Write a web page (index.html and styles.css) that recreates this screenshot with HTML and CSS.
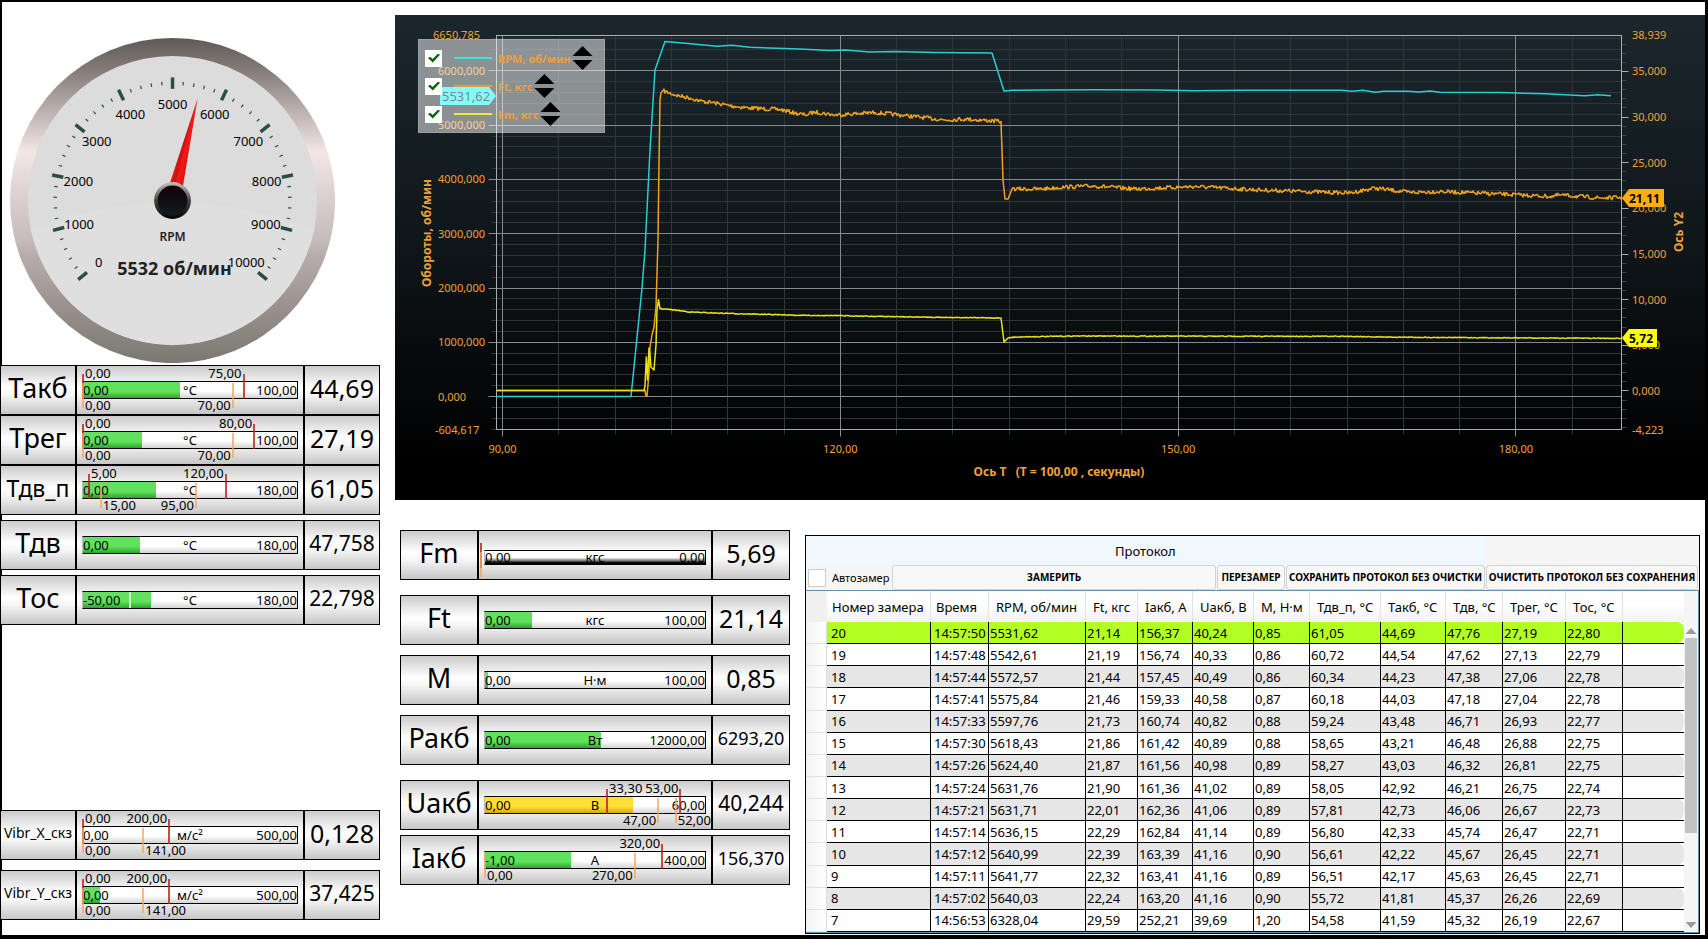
FILE: index.html
```html
<!DOCTYPE html>
<html lang="ru">
<head>
<meta charset="utf-8">
<title>Стенд: измерения</title>
<link rel="stylesheet" href="styles.css">
</head>
<body>
<main class="dashboard">
  <section class="sensors">
    <svg class="gauge" id="gauge" viewBox="0 0 326 326" role="img" aria-label="RPM 5532 об/мин">
      <defs>
        <linearGradient id="bezel" x1="0" y1="0" x2="0" y2="1">
          <stop offset="0" stop-color="#5e5a57"/>
          <stop offset=".1" stop-color="#857c79"/>
          <stop offset=".35" stop-color="#f2e6e6"/>
          <stop offset=".62" stop-color="#c6bcbb"/>
          <stop offset=".67" stop-color="#b7acab"/>
          <stop offset=".85" stop-color="#968d89"/>
          <stop offset="1" stop-color="#7a7871"/>
        </linearGradient>
        <linearGradient id="hubRing" x1="0" y1="0" x2="0" y2="1">
          <stop offset="0" stop-color="#c8bcbc"/>
          <stop offset=".5" stop-color="#4c4444"/>
          <stop offset="1" stop-color="#000"/>
        </linearGradient>
        <linearGradient id="hubCore" x1="0" y1="0" x2="0" y2="1">
          <stop offset="0" stop-color="#120004"/>
          <stop offset="1" stop-color="#101c22"/>
        </linearGradient>
        <linearGradient id="needleFill" x1="0" y1="0" x2="1" y2="0">
          <stop offset="0" stop-color="#f01818"/>
          <stop offset=".35" stop-color="#c81212"/>
          <stop offset=".5" stop-color="#f51818"/>
          <stop offset="1" stop-color="#e01010"/>
        </linearGradient>
      </defs>
      <circle cx="163" cy="163" r="163" fill="url(#bezel)"/>
      <circle cx="163" cy="163" r="145" fill="#dcdcdc"/>
      <path d="M21 192 Q163 138 305 192 A145 145 0 0 1 21 192Z" fill="#dfdfdf"/>
      <g id="gaugeTicks"></g>
      <text class="gauge-name" x="163" y="204">RPM</text>
      <text class="gauge-value" x="165" y="238">5532 об/мин</text>
      <path d="M163 58 L170 150 L156 150Z" fill="url(#needleFill)" transform="rotate(13.8 163 163)"/>
      <circle cx="163" cy="163" r="18.5" fill="url(#hubRing)"/>
      <circle cx="163" cy="163" r="15" fill="url(#hubCore)"/>
    </svg>

    <div class="meter">
      <div class="cell name">Такб</div>
      <div class="cell"><div class="scale"><div class="fill" style="width:45.2%"></div>
        <div class="legends"><span>0,00</span><span>°C</span><span>100,00</span></div>
        <span class="limit alarm after" style="left:0%">0,00</span><span class="limit alarm before" style="right:25%">75,00</span>
        <span class="limit warn after" style="left:0%">0,00</span><span class="limit warn before" style="right:30%">70,00</span></div></div>
      <div class="cell value">44,69</div>
    </div>
    <div class="meter">
      <div class="cell name">Трег</div>
      <div class="cell"><div class="scale"><div class="fill" style="width:27.7%"></div>
        <div class="legends"><span>0,00</span><span>°C</span><span>100,00</span></div>
        <span class="limit alarm after" style="left:0%">0,00</span><span class="limit alarm before" style="right:20%">80,00</span>
        <span class="limit warn after" style="left:0%">0,00</span><span class="limit warn before" style="right:30%">70,00</span></div></div>
      <div class="cell value">27,19</div>
    </div>
    <div class="meter">
      <div class="cell name name-md">Тдв_п</div>
      <div class="cell"><div class="scale"><div class="fill" style="width:34.2%"></div>
        <div class="legends"><span>0,00</span><span>°C</span><span>180,00</span></div>
        <span class="limit alarm after" style="left:2.8%">5,00</span><span class="limit alarm before" style="right:33.3%">120,00</span>
        <span class="limit warn after" style="left:8.3%">15,00</span><span class="limit warn before" style="right:47.2%">95,00</span></div></div>
      <div class="cell value">61,05</div>
    </div>
    <div class="meter space-sm">
      <div class="cell name">Тдв</div>
      <div class="cell"><div class="scale"><div class="fill" style="width:26.8%"></div>
        <div class="legends"><span>0,00</span><span>°C</span><span>180,00</span></div></div></div>
      <div class="cell value value-md">47,758</div>
    </div>
    <div class="meter space-sm">
      <div class="cell name">Тос</div>
      <div class="cell"><div class="scale"><div class="fill" style="width:31.9%"></div><div class="zero" style="left:21.7%"></div>
        <div class="legends"><span>-50,00</span><span>°C</span><span>180,00</span></div></div></div>
      <div class="cell value value-md">22,798</div>
    </div>
    <div class="meter to-bottom">
      <div class="cell name name-sm">Vibr_X_скз</div>
      <div class="cell"><div class="scale">
        <div class="legends"><span>0,00</span><span>м/с²</span><span>500,00</span></div>
        <span class="limit alarm after" style="left:0%">0,00</span><span class="limit alarm before" style="right:59.7%">200,00</span>
        <span class="limit warn after" style="left:0%">0,00</span><span class="limit warn after" style="left:28.2%">141,00</span></div></div>
      <div class="cell value">0,128</div>
    </div>
    <div class="meter space-md">
      <div class="cell name name-sm">Vibr_Y_скз</div>
      <div class="cell"><div class="scale"><div class="fill" style="width:7.8%"></div>
        <div class="legends"><span>0,00</span><span>м/с²</span><span>500,00</span></div>
        <span class="limit alarm after" style="left:0%">0,00</span><span class="limit alarm before" style="right:59.7%">200,00</span>
        <span class="limit warn after" style="left:0%">0,00</span><span class="limit warn after" style="left:28.2%">141,00</span></div></div>
      <div class="cell value value-md">37,425</div>
    </div>
  </section>

  <div class="workspace">
    <section class="chart">
      <svg id="plot" viewBox="0 0 1310 485" role="img" aria-label="График RPM, Ft, Fm"></svg>
      <form class="legend">
        <div class="legend-row"><input type="checkbox" id="s1" checked><i class="swatch cyan"></i><label for="s1">RPM, об/мин</label>
          <span class="spin"><button type="button" class="up" aria-label="Выше"></button><button type="button" class="down" aria-label="Ниже"></button></span></div>
        <div class="legend-row"><input type="checkbox" id="s2" checked><i class="swatch orange"></i><label for="s2">Ft, кгс</label>
          <span class="spin"><button type="button" class="up" aria-label="Выше"></button><button type="button" class="down" aria-label="Ниже"></button></span></div>
        <div class="legend-row"><input type="checkbox" id="s3" checked><i class="swatch yellow"></i><label for="s3">Fm, кгс</label>
          <span class="spin"><button type="button" class="up" aria-label="Выше"></button><button type="button" class="down" aria-label="Ниже"></button></span></div>
      </form>
    </section>

    <div class="lower">
      <section class="forces">
        <div class="meter">
          <div class="cell name">Fm</div>
          <div class="cell"><div class="scale scale-empty">
            <div class="legends"><span>0,00</span><span>кгс</span><span>0,00</span></div>
            <span class="limit alarm after" style="left:-2%"></span><span class="limit warn after" style="left:-2%"></span></div></div>
          <div class="cell value">5,69</div>
        </div>
        <div class="meter space-lg">
          <div class="cell name">Ft</div>
          <div class="cell"><div class="scale"><div class="fill" style="width:21.5%"></div>
            <div class="legends"><span>0,00</span><span>кгс</span><span>100,00</span></div></div></div>
          <div class="cell value">21,14</div>
        </div>
        <div class="meter space-md">
          <div class="cell name">М</div>
          <div class="cell"><div class="scale"><div class="fill" style="width:1.2%"></div>
            <div class="legends"><span>0,00</span><span>Н·м</span><span>100,00</span></div></div></div>
          <div class="cell value">0,85</div>
        </div>
        <div class="meter space-md">
          <div class="cell name">Ракб</div>
          <div class="cell"><div class="scale"><div class="fill" style="width:52.6%"></div>
            <div class="legends"><span>0,00</span><span>Вт</span><span>12000,00</span></div></div></div>
          <div class="cell value value-sm">6293,20</div>
        </div>
        <div class="meter space-lg">
          <div class="cell name">Uакб</div>
          <div class="cell"><div class="scale"><div class="fill fill-warn" style="width:67.3%"></div>
            <div class="legends"><span>0,00</span><span>В</span><span>60,00</span></div>
            <span class="limit alarm after" style="left:55.5%">33,30</span><span class="limit alarm before" style="right:11.2%">53,00</span>
            <span class="limit warn before" style="right:21.3%">47,00</span><span class="limit warn after" style="left:86.7%">52,00</span></div></div>
          <div class="cell value value-md">40,244</div>
        </div>
        <div class="meter space-sm">
          <div class="cell name">Iакб</div>
          <div class="cell"><div class="scale"><div class="fill" style="width:39.3%"></div>
            <div class="legends"><span>-1,00</span><span>А</span><span>400,00</span></div>
            <span class="limit alarm before" style="right:19.5%">320,00</span>
            <span class="limit warn after" style="left:0%">0,00</span><span class="limit warn before" style="right:32%">270,00</span></div></div>
          <div class="cell value value-sm">156,370</div>
        </div>
      </section>

      <section class="protocol">
        <div class="protocol-head"><h1>Протокол</h1></div>
        <div class="toolbar">
          <input type="checkbox" id="auto"><label for="auto">Автозамер</label>
          <button type="button" class="grow">ЗАМЕРИТЬ</button>
          <button type="button" class="b-redo">ПЕРЕЗАМЕР</button>
          <button type="button" class="b-save">СОХРАНИТЬ ПРОТОКОЛ БЕЗ ОЧИСТКИ</button>
          <button type="button" class="b-clear">ОЧИСТИТЬ ПРОТОКОЛ БЕЗ СОХРАНЕНИЯ</button>
        </div>
        <div class="grid-box">
          <table>
            <colgroup><col class="c0"><col class="c1"><col class="c2"><col class="c3"><col class="c4"><col class="c5"><col class="c6"><col class="c7"><col class="c8"><col class="c9"><col class="c10"><col class="c11"><col class="c12"><col></colgroup>
            <thead><tr><td></td><th>Номер замера</th><th>Время</th><th>RPM, об/мин</th><th>Ft, кгс</th><th>Iакб, А</th><th>Uакб, В</th><th>М, Н·м</th><th>Тдв_п, °C</th><th>Такб, °C</th><th>Тдв, °C</th><th>Трег, °C</th><th>Тос, °C</th><th></th></tr></thead>
            <tbody>
              <tr class="selected"><td></td><td>20</td><td>14:57:50</td><td>5531,62</td><td>21,14</td><td>156,37</td><td>40,24</td><td>0,85</td><td>61,05</td><td>44,69</td><td>47,76</td><td>27,19</td><td>22,80</td><td></td></tr>
              <tr><td></td><td>19</td><td>14:57:48</td><td>5542,61</td><td>21,19</td><td>156,74</td><td>40,33</td><td>0,86</td><td>60,72</td><td>44,54</td><td>47,62</td><td>27,13</td><td>22,79</td><td></td></tr>
              <tr><td></td><td>18</td><td>14:57:44</td><td>5572,57</td><td>21,44</td><td>157,45</td><td>40,49</td><td>0,86</td><td>60,34</td><td>44,23</td><td>47,38</td><td>27,06</td><td>22,78</td><td></td></tr>
              <tr><td></td><td>17</td><td>14:57:41</td><td>5575,84</td><td>21,46</td><td>159,33</td><td>40,58</td><td>0,87</td><td>60,18</td><td>44,03</td><td>47,18</td><td>27,04</td><td>22,78</td><td></td></tr>
              <tr><td></td><td>16</td><td>14:57:33</td><td>5597,76</td><td>21,73</td><td>160,74</td><td>40,82</td><td>0,88</td><td>59,24</td><td>43,48</td><td>46,71</td><td>26,93</td><td>22,77</td><td></td></tr>
              <tr><td></td><td>15</td><td>14:57:30</td><td>5618,43</td><td>21,86</td><td>161,42</td><td>40,89</td><td>0,88</td><td>58,65</td><td>43,21</td><td>46,48</td><td>26,88</td><td>22,75</td><td></td></tr>
              <tr><td></td><td>14</td><td>14:57:26</td><td>5624,40</td><td>21,87</td><td>161,56</td><td>40,98</td><td>0,89</td><td>58,27</td><td>43,03</td><td>46,32</td><td>26,81</td><td>22,75</td><td></td></tr>
              <tr><td></td><td>13</td><td>14:57:24</td><td>5631,76</td><td>21,90</td><td>161,36</td><td>41,02</td><td>0,89</td><td>58,05</td><td>42,92</td><td>46,21</td><td>26,75</td><td>22,74</td><td></td></tr>
              <tr><td></td><td>12</td><td>14:57:21</td><td>5631,71</td><td>22,01</td><td>162,36</td><td>41,06</td><td>0,89</td><td>57,81</td><td>42,73</td><td>46,06</td><td>26,67</td><td>22,73</td><td></td></tr>
              <tr><td></td><td>11</td><td>14:57:14</td><td>5636,15</td><td>22,29</td><td>162,84</td><td>41,14</td><td>0,89</td><td>56,80</td><td>42,33</td><td>45,74</td><td>26,47</td><td>22,71</td><td></td></tr>
              <tr><td></td><td>10</td><td>14:57:12</td><td>5640,99</td><td>22,39</td><td>163,39</td><td>41,16</td><td>0,90</td><td>56,61</td><td>42,22</td><td>45,67</td><td>26,45</td><td>22,71</td><td></td></tr>
              <tr><td></td><td>9</td><td>14:57:11</td><td>5641,77</td><td>22,32</td><td>163,41</td><td>41,16</td><td>0,89</td><td>56,51</td><td>42,17</td><td>45,63</td><td>26,45</td><td>22,71</td><td></td></tr>
              <tr><td></td><td>8</td><td>14:57:02</td><td>5640,03</td><td>22,24</td><td>163,20</td><td>41,16</td><td>0,90</td><td>55,72</td><td>41,81</td><td>45,37</td><td>26,26</td><td>22,69</td><td></td></tr>
              <tr><td></td><td>7</td><td>14:56:53</td><td>6328,04</td><td>29,59</td><td>252,21</td><td>39,69</td><td>1,20</td><td>54,58</td><td>41,59</td><td>45,32</td><td>26,19</td><td>22,67</td><td></td></tr>
            </tbody>
          </table>
          <div class="scrollbar"><i class="arrow arrow-up"></i><i class="thumb"></i><i class="arrow arrow-down"></i></div>
        </div>
      </section>
    </div>
  </div>
</main>
<script src="app.js"></script>
</body>
</html>
```
FILE: styles.css
```css
* { box-sizing: border-box; }
body { margin: 0; background: #fff; color: #000; font: 13px/15px "Noto Sans", "Open Sans", sans-serif; }
button, input { margin: 0; padding: 0; font: inherit; color: inherit; }

.dashboard {
  display: grid;
  grid-template-columns: minmax(0, 378fr) minmax(0, 1310fr);
  column-gap: 15px;
  min-height: 100vh;
  border: solid #000;
  border-width: 2px 3px 4px 2px;
}
.workspace { padding-top: 13px; }

/* left column */
.sensors { display: flex; flex-direction: column; padding: 36px 0 15px; }
.sensors .meter { margin-left: -2px; }
.gauge { display: block; width: 86%; margin: 0 0 2px 8px; }
.gauge text { text-anchor: middle; font-size: 13px; fill: #000; }
.gauge .gauge-name { font-size: 12px; font-weight: 600; fill: #222; }
.gauge .gauge-value { font-size: 18px; font-weight: 700; fill: #222; }

/* meters */
.meter { display: grid; grid-template-columns: 1fr 3fr 1fr; height: 50px; }
.space-sm { margin-top: 5px; }
.space-md { margin-top: 10px; }
.space-lg { margin-top: 15px; }
.to-bottom { margin-top: auto; }
.cell {
  min-width: 0;
  border: 1px solid #000;
  background: linear-gradient(#cbcbcb, #fff 45%, #f6f6f6 60%, #c6c6c6);
}
.name, .value { display: flex; align-items: center; justify-content: center; white-space: nowrap; line-height: 30px; padding-bottom: 4px; }
.name { font-size: 27px; }
.name-md { font-size: 23px; }
.name-sm { font-size: 14px; }
.value { font-size: 25px; }
.value-md { font-size: 21px; }
.value-sm { font-size: 18px; }
.scale {
  position: relative;
  height: 18px;
  margin: 15px 5px 0;
  border: 1px solid #000;
  border-left-color: #bbb;
  background: linear-gradient(#fff 55%, #d4d4d4);
}
.scale-empty { height: 15px; margin-top: 19px; background: linear-gradient(#fff 50%, #777 75%, #000 90%); }
.scale-empty .legends { line-height: 13px; }
.fill { position: absolute; inset: 0 auto 0 0; background: linear-gradient(#62e15e 60%, #2da52b); }
.fill-warn { background: linear-gradient(#ffdf35 60%, #d3a814); }
.zero { position: absolute; top: 0; bottom: 0; width: 2px; background: #d5ead3; }
.legends { position: relative; display: grid; grid-template-columns: 1fr auto 1fr; line-height: 16px; }
.legends span:last-child { text-align: right; }
.limit { position: absolute; line-height: 15px; height: 15px; }
.limit::before { content: ""; position: absolute; width: 2px; height: 25px; }
.after { padding-left: 2px; }
.before { padding-right: 2px; }
.after::before { left: -1px; }
.before::before { right: -1px; }
.alarm { top: -16px; }
.alarm::before { top: 8px; background: rgba(190, 30, 30, .8); }
.warn { top: 16px; }
.warn::before { bottom: 5px; background: rgba(245, 165, 85, .75); }

/* chart */
.chart { position: relative; background: linear-gradient(#1b272d, #10171b 45%, #000 92%); }
.chart > svg { display: block; width: 100%; }
.chart text { font-size: 11px; fill: #f0a038; }
.chart .axis-title { font-size: 12px; font-weight: 700; }
.chart .flag-text { font-size: 12px; font-weight: 700; fill: #000; }
.chart .flag-plain { font-size: 13px; font-weight: 400; }
.chart polyline { fill: none; stroke-width: 1.5; stroke-linejoin: round; }
.legend {
  position: absolute;
  left: 23px;
  top: 24px;
  width: 187px;
  padding: 4px 6px;
  border: 1px solid rgba(255, 255, 255, .15);
  background: rgba(255, 255, 255, .5);
}
.legend-row { display: flex; align-items: center; height: 28px; color: #f0a038; font-size: 11px; font-weight: 700; white-space: nowrap; }
.legend-row input {
  appearance: none;
  flex: none;
  width: 17px;
  height: 17px;
  margin-right: 12px;
  background: #fff;
}
.legend-row input:checked::before {
  content: "";
  display: block;
  width: 12px;
  height: 9px;
  margin: 4px 3px;
  background: #0a640a;
  clip-path: polygon(0 50%, 18% 35%, 38% 60%, 85% 0, 100% 15%, 40% 100%);
}
.swatch { flex: none; width: 38px; height: 2px; margin-right: 6px; }
.cyan { background: #45dede; }
.orange { background: #d8a53c; }
.yellow { background: #f0e840; }
.spin { display: flex; flex-direction: column; gap: 4px; margin-left: 2px; }
.spin button { width: 20px; height: 10px; border: 0; background: #000; }
.up { clip-path: polygon(50% 0, 100% 100%, 0 100%); }
.down { clip-path: polygon(0 0, 100% 0, 50% 100%); }

/* lower part */
.lower {
  display: grid;
  grid-template-columns: minmax(0, 390fr) minmax(0, 895fr);
  column-gap: 15px;
  padding: 30px 5px 1px;
}
.protocol { margin-top: 5px; border: 1px solid #000; background: #f5f5f5; }
.protocol-head { display: flex; height: 29px; }
.protocol-head h1 {
  flex: 0 0 76%;
  margin: 0;
  background: #f0f8fe;
  font-size: 13px;
  font-weight: 400;
  line-height: 31px;
  text-align: center;
}
.toolbar { display: flex; align-items: center; height: 25px; gap: 1px; padding: 0 1px; }
.toolbar input { appearance: none; width: 18px; height: 18px; margin: 0 5px 0 1px; border: 1px solid #ccc; background: #fff; }
.toolbar label { font-size: 11px; margin-right: 2px; }
.toolbar button {
  height: 25px;
  border: 1px solid #d2d2d2;
  border-radius: 3px;
  background: #f8f8f8;
  font-size: 10px;
  font-weight: 700;
  white-space: nowrap;
}
.grow { flex: 1; }
.b-redo { width: 68px; }
.b-save { width: 199px; }
.b-clear { width: 212px; }
.grid-box { display: flex; border: 1px solid #6b8fa8; border-width: 1px 1px 1px 0; background: #fff; }
table { flex: 1; min-width: 0; height: 341px; table-layout: fixed; border-collapse: separate; border-spacing: 0; }
.c0 { width: 21px; } .c1 { width: 104px; } .c2 { width: 58px; } .c3 { width: 97px; }
.c4 { width: 52px; } .c5 { width: 55px; } .c6 { width: 61px; } .c7 { width: 56px; }
.c8 { width: 71px; } .c9 { width: 65px; } .c10 { width: 57px; } .c11 { width: 63px; } .c12 { width: 57px; }
th, td { padding: 0; text-align: left; white-space: nowrap; overflow: hidden; }
thead th {
  height: 31px;
  padding: 2px 0 0 7px;
  border-right: 1px solid #e2e2e2;
  background: linear-gradient(#fff 40%, #f2f2f4);
  font-weight: 400;
}
thead th:nth-child(2), thead th:nth-child(3) { padding-left: 5px; }
thead td { background: #f0f0f0; }
thead th:last-child { border-right: 0; }
tbody td { height: 22px; padding: 1px 0 0 1px; border-right: 1px solid #000; border-bottom: 1px solid #000; }
tbody td:nth-child(2) { padding-left: 4px; }
tbody td:nth-child(3) { padding-left: 3px; }
tbody td:first-child { border-right: 1px solid #ddd; border-bottom-color: #e2e2e2; background: linear-gradient(90deg, #f2f2f2, #fff); }
tbody tr:nth-child(odd) td:not(:first-child) { background: #e6e6e6; }
tbody tr.selected td:not(:first-child) { background: #b2ff24; }
tbody tr td:last-child:not(:first-child) { position: relative; border-right: 0; background: none; }
tbody td:last-child::before { content: ""; position: absolute; inset: 0; border-radius: 0 7px 7px 0; }
tbody tr:nth-child(odd) td:last-child::before { background: #e6e6e6; }
tbody tr.selected td:last-child:last-child::before { background: #b2ff24; }
.scrollbar { display: flex; flex-direction: column; align-items: center; width: 14px; padding: 37px 0 4px; background: #f5f5f5; }
.arrow { width: 11px; height: 6px; background: #9a9a9a; }
.arrow-up { clip-path: polygon(50% 0, 100% 100%, 0 100%); }
.arrow-down { clip-path: polygon(0 0, 100% 0, 50% 100%); margin-top: auto; }
.thumb { width: 12px; height: 195px; margin-top: 4px; background: #c2c3c3; }
```
FILE: app.js
```js
const NS = "http://www.w3.org/2000/svg";
function add(parent, tag, attrs, text) {
  const el = document.createElementNS(NS, tag);
  for (const k in attrs) el.setAttribute(k, attrs[k]);
  if (text !== undefined) el.textContent = text;
  parent.appendChild(el);
  return el;
}

/* Gauge: 0..10000 over 260 degrees */
const ticks = document.getElementById("gaugeTicks");
for (let v = 0; v <= 10000; v += 200) {
  const deg = v * 0.026 - 130;
  const major = v % 1000 === 0;
  add(ticks, "line", {
    x1: 163, x2: 163, y1: major ? 39.5 : 43.5, y2: major ? 51 : 47,
    stroke: "#2b4d49", "stroke-width": major ? 3.5 : 1.2,
    transform: `rotate(${deg} 163 163)`
  });
  if (major) {
    const a = deg * Math.PI / 180;
    add(ticks, "text", { x: 163 + 96.5 * Math.sin(a), y: 168 - 96.5 * Math.cos(a) }, v);
  }
}

/* Chart */
const plot = document.getElementById("plot");
const L = 101.5, R = 1226.5, T = 20.5, B = 414.5;
const yRpm = v => B - (v + 604.617) * (B - T) / 7255.402;
const yF = v => B - (v + 4.223) * (B - T) / 43.162;
const xT = t => 107.5 + (t - 90) * 11.26;
const snap = n => Math.floor(n) + 0.5;
const fmt = (v, d) => v.toFixed(d).replace(".", ",");
const line = (x1, y1, x2, y2, c) => add(plot, "line", { x1, y1, x2, y2, stroke: c });
const MINOR = "#2c363b", MAJOR = "#858b8c", FRAME = "#a9adad";

for (let v = -600; v <= 6600; v += 200) if (v % 1000) line(L - 5, snap(yRpm(v)), R, snap(yRpm(v)), MINOR);
for (let t = 95; t < 190; t += 5) if (t % 30) line(snap(xT(t)), T, snap(xT(t)), B + 5, MINOR);
for (let v = -4; v <= 38; v++) if (v % 5) line(R, snap(yF(v)), R + 5, snap(yF(v)), "#3a4448");
for (let v = 0; v <= 6000; v += 1000) {
  line(L - 8, snap(yRpm(v)), R, snap(yRpm(v)), MAJOR);
  add(plot, "text", { x: 43, y: yRpm(v) + 4 }, fmt(v, 3));
}
for (let t = 90; t <= 180; t += 30) {
  line(snap(xT(t)), T, snap(xT(t)), B + 7, MAJOR);
  add(plot, "text", { x: xT(t), y: 438, "text-anchor": "middle" }, fmt(t, 2));
}
for (let v = 0; v <= 35; v += 5) {
  line(R, snap(yF(v)), R + 7, snap(yF(v)), FRAME);
  add(plot, "text", { x: 1237, y: yF(v) + 4 }, fmt(v, 3));
}
add(plot, "rect", { x: L, y: T, width: R - L, height: B - T, fill: "none", stroke: FRAME });
add(plot, "text", { x: 38, y: 24 }, "6650,785");
add(plot, "text", { x: 40, y: 419 }, "-604,617");
add(plot, "text", { x: 1237, y: 24 }, "38,939");
add(plot, "text", { x: 1237, y: 419 }, "-4,223");
const title = { class: "axis-title", "text-anchor": "middle" };
add(plot, "text", { ...title, transform: "translate(36 218) rotate(-90)" }, "Обороты, об/мин");
add(plot, "text", { ...title, transform: "translate(1288 217) rotate(-90)" }, "Ось Y2");
add(plot, "text", { ...title, x: 664, y: 461 }, "Ось Т \u00a0 (Т = 100,00 , секунды)");

/* Interpolates between key points, adding repeatable noise from x = from */
let seed = 7;
const rnd = () => (seed = (seed * 16807) % 2147483647) / 2147483647 - 0.5;
function trace(pts, color, noise, from) {
  const out = [];
  for (let i = 0; i < pts.length - 1; i++) {
    const [x0, y0] = pts[i], [x1, y1] = pts[i + 1];
    out.push([x0, y0]);
    if (noise && x0 >= from && x1 - x0 > 5)
      for (let x = x0 + 1; x < x1; x += 1)
        out.push([x, y0 + (y1 - y0) * (x - x0) / (x1 - x0) + rnd() * noise]);
  }
  out.push(pts[pts.length - 1]);
  add(plot, "polyline", { stroke: color, points: out.map(p => p[0].toFixed(1) + "," + p[1].toFixed(1)).join(" ") });
}
trace([[102,381.5],[236,381.5],[247,273],[250,235],[255,135],[260,55],[270,26.5],[293,28.5],[322,31.3],[337,30.3],[355,32.3],[405,34],[435,35.5],[450,35],[475,37],[500,36.5],[540,37.5],[597,38],[609,76],[618,75.3],[650,75],[700,74.8],[760,75],[800,75.8],[850,75.3],[947,75.3],[957,76.3],[968,75.3],[980,77.3],[989,76.3],[1013,76.3],[1024,77],[1035,76],[1045,77.3],[1105,77.5],[1150,78.7],[1190,80.7],[1203,79.7],[1216,80.7]], "#28cfd2");
trace([[102,375.5],[250,375.5],[251,381],[252,381],[254,358],[255,332],[257,320],[259,312],[261,292],[263,225],[264,148],[265,85],[266,77.7],[268,75.7],[280,80],[295,83],[305,86],[320,88],[340,91.5],[355,93],[385,94.5],[400,98],[410,100],[420,97],[440,100],[480,97.5],[510,100.5],[550,105],[570,104],[606,106.5],[608,165],[610,184],[613,184],[617,174],[645,174],[670,172],[700,171],[740,174],[800,171.5],[865,175],[940,177.5],[955,178],[980,173],[1015,177.5],[1045,176.5],[1125,180],[1155,181.5],[1165,180],[1205,183],[1227,182.5]], "#f0a21c", 4, 268);
trace([[102,375.5],[249,375.5],[250,371],[251.3,342],[252.5,365],[254,333],[255,340],[256,352],[259,355],[261,330],[262,295],[263.5,284.7],[265,293.7],[280,295],[295,297],[320,298],[355,299],[405,300.3],[435,300.5],[520,302],[606,303],[609,327],[613,323],[620,322],[680,321],[865,321.3],[950,321.3],[990,322],[1055,322.5],[1145,323],[1227,323.3]], "#e8e414", 0.8, 265);

/* Current value flags */
function flag(points, color, cls, x, y, text) {
  add(plot, "polygon", { points, fill: color });
  add(plot, "text", { class: "flag-text " + cls, x, y }, text);
}
flag("45,72 94,72 101,81 94,90 45,90", "#00ffff", "flag-plain", 47, 86, "5531,62");
flag("1227,183 1234,174 1269,174 1269,192 1234,192", "#ffae0c", "flag-bold", 1234, 188, "21,11");
flag("1227,323 1234,314 1262,314 1262,332 1234,332", "#ffff00", "flag-bold", 1234, 328, "5,72");
```
